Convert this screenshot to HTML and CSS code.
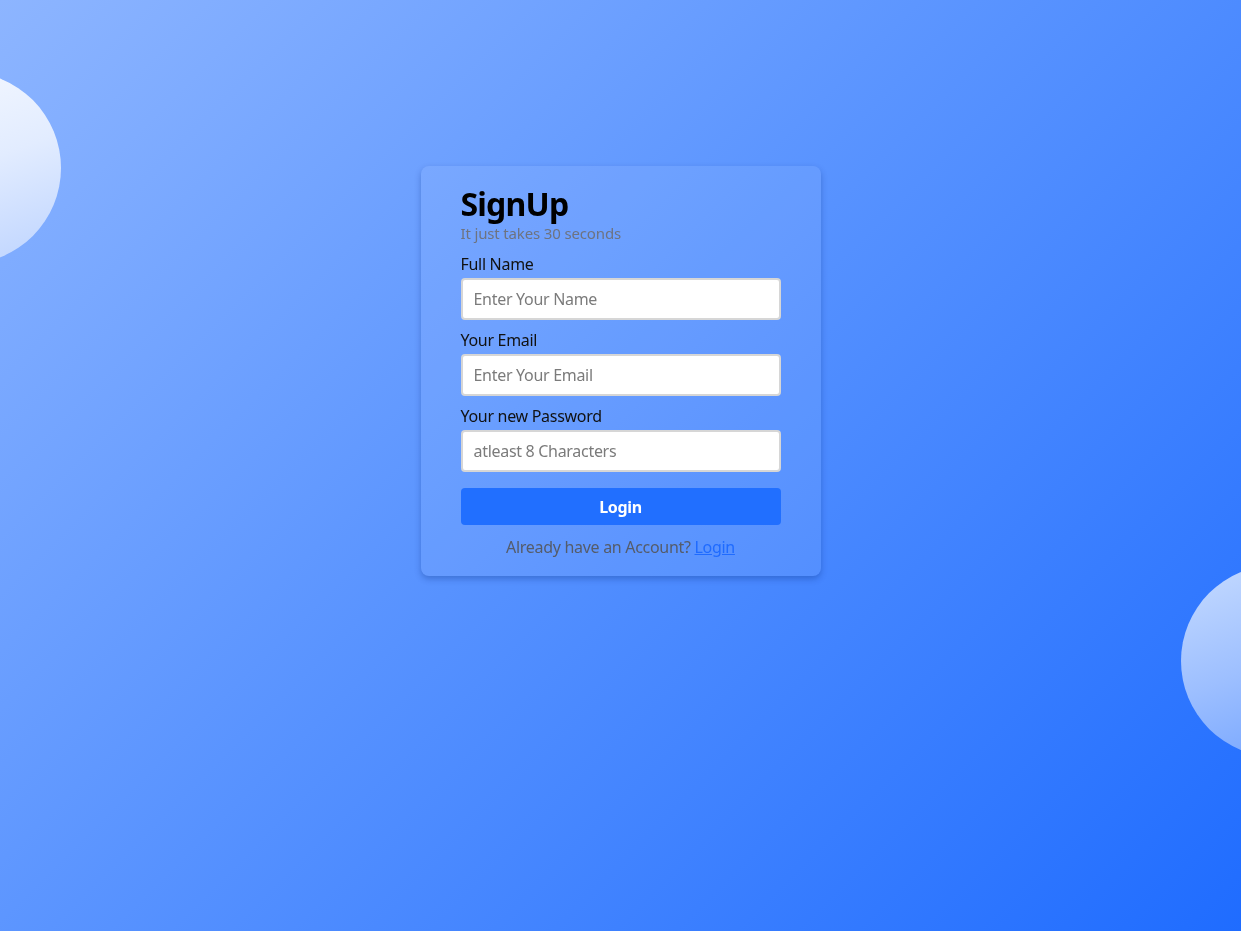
FILE: index.html
```html
<!DOCTYPE html>
<html lang="en">
<head>
<meta charset="utf-8">
<title>SignUp</title>
<link rel="stylesheet" href="styles.css">
</head>
<body>
<div class="scene">
  <div class="bubble bubble-left"></div>
  <div class="bubble bubble-right"></div>
</div>
<main class="page">
  <form class="card">
    <h1 class="title">SignUp</h1>
    <p class="subtitle">It just takes 30 seconds</p>
    <label class="field">
      <span class="label">Full Name</span>
      <input class="input" type="text" placeholder="Enter Your Name">
    </label>
    <label class="field">
      <span class="label">Your Email</span>
      <input class="input" type="email" placeholder="Enter Your Email">
    </label>
    <label class="field">
      <span class="label">Your new Password</span>
      <input class="input" type="password" placeholder="atleast 8 Characters">
    </label>
    <button class="btn" type="button">Login</button>
    <p class="footer">Already have an Account? <a href="#" class="link">Login</a></p>
  </form>
</main>
</body>
</html>
```
FILE: styles.css
```css
* { box-sizing: border-box; }
html, body { height: 100%; }
body {
  margin: 0;
  font-family: "Noto Sans", "Open Sans", sans-serif;
  background: linear-gradient(135deg, #8db5ff 0%, #5a94ff 45%, #1f6cff 100%);
  overflow: hidden;
  position: relative;
}
.scene {
  position: fixed;
  inset: 0;
  overflow: hidden;
  pointer-events: none;
}
.bubble {
  position: absolute;
  width: 192px;
  height: 192px;
  border-radius: 50%;
}
.bubble-left {
  left: -131px;
  top: 72px;
  background: linear-gradient(160deg, #f7faff 0%, #e2ecff 50%, #bcd3ff 100%);
}
.bubble-right {
  left: 1181px;
  top: 565px;
  background: linear-gradient(160deg, #c6dbff 0%, #9dbfff 50%, #6c9fff 100%);
}
.page {
  position: relative;
  display: flex;
  justify-content: center;
  padding-top: 166px;
}
.card {
  width: 400px;
  padding: 19px 40px 19px;
  border-radius: 8px;
  background: rgba(255, 255, 255, 0.08);
  box-shadow: 0 3px 6px rgba(0, 40, 120, 0.3);
  display: flex;
  flex-direction: column;
}
.title {
  margin: 0;
  font-size: 32px;
  line-height: 38px;
  font-weight: 700;
  color: #000;
  letter-spacing: -0.8px;
}
.subtitle {
  margin: 0 0 11px;
  font-size: 15px;
  line-height: 20px;
  color: #6e7380;
  letter-spacing: -0.15px;
}
.field {
  display: flex;
  flex-direction: column;
  margin-bottom: 10px;
}
.label {
  font-size: 16px;
  line-height: 20px;
  color: #111;
  margin-bottom: 4px;
  letter-spacing: -0.3px;
}
.input {
  height: 42px;
  width: 100%;
  border: 2px solid #d6d6d6;
  border-radius: 4px;
  background: #fff;
  padding: 0 11px;
  font-family: inherit;
  font-size: 16px;
  letter-spacing: -0.3px;
  color: #333;
  outline: none;
}
.input::placeholder { color: #7b7b7b; }
.btn {
  margin-top: 6px;
  height: 37px;
  border: none;
  border-radius: 4px;
  background: #216fff;
  color: #fff;
  font-family: inherit;
  font-size: 16px;
  font-weight: 700;
  letter-spacing: -0.3px;
  cursor: pointer;
}
.footer {
  margin: 12px 0 0;
  text-align: center;
  font-size: 16px;
  line-height: 20px;
  color: #555c6a;
  letter-spacing: -0.3px;
}
.link { color: #1f6bff; text-decoration: underline; }
```
